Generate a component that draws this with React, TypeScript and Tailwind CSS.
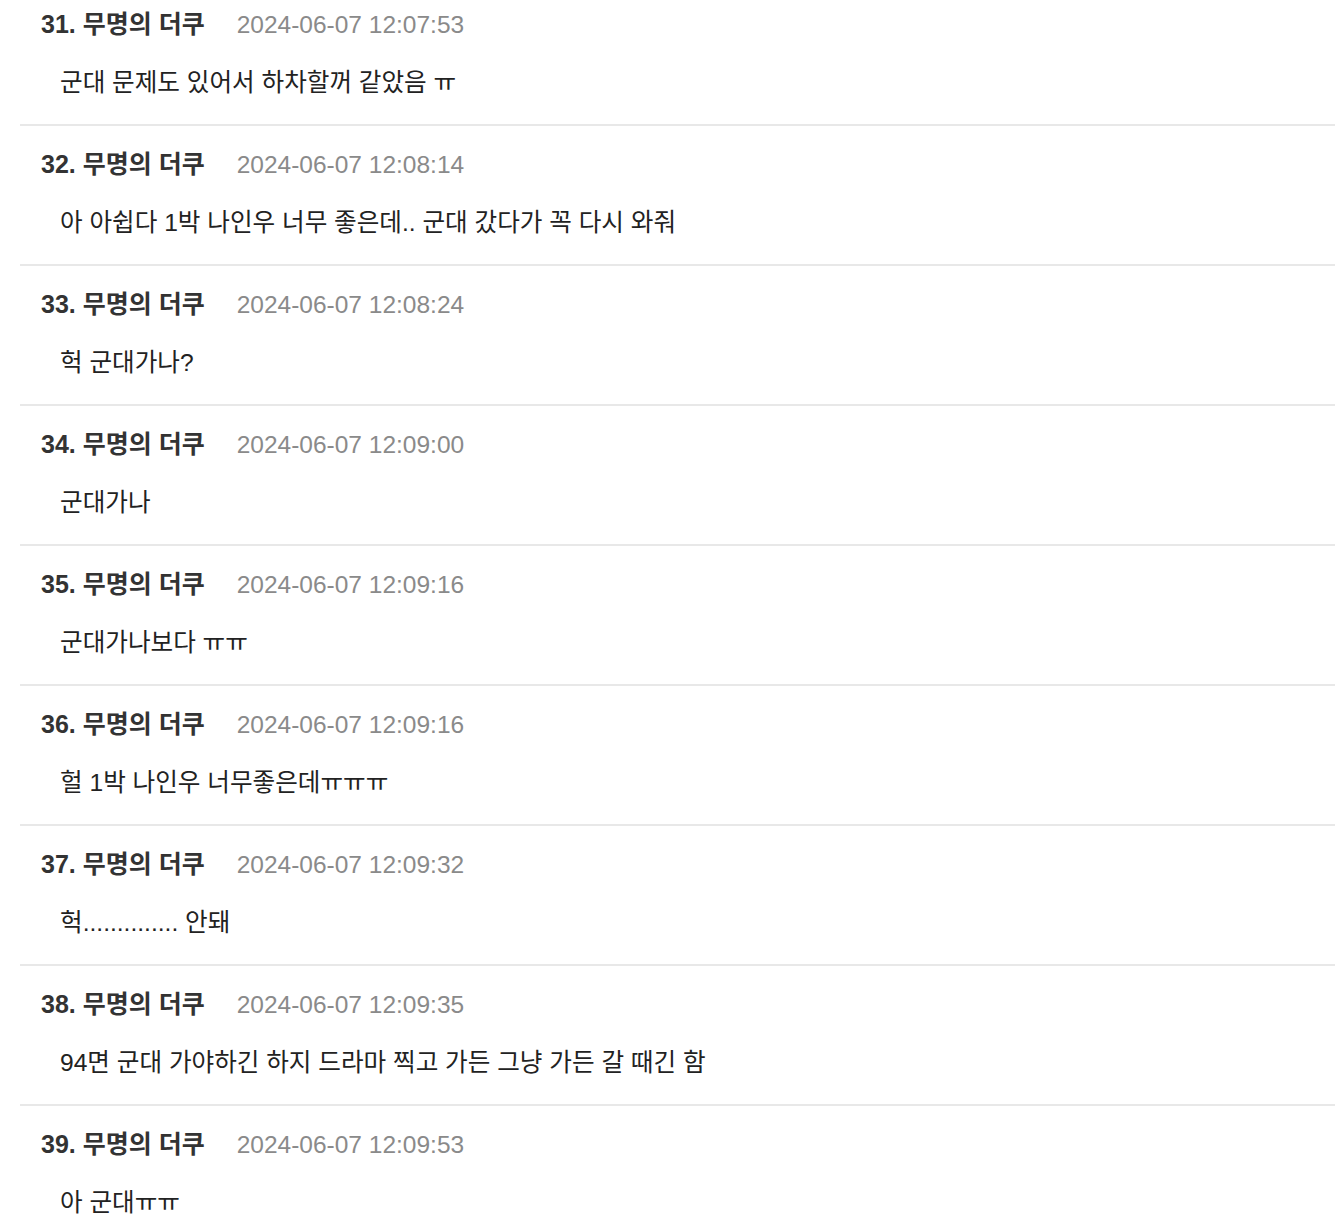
const comments = [
  {no: 31, name: '무명의 더쿠', date: '2024-06-07 12:07:53', body: '군대 문제도 있어서 하차할꺼 같았음 ㅠ'},
  {no: 32, name: '무명의 더쿠', date: '2024-06-07 12:08:14', body: '아 아쉽다 1박 나인우 너무 좋은데.. 군대 갔다가 꼭 다시 와줘'},
  {no: 33, name: '무명의 더쿠', date: '2024-06-07 12:08:24', body: '헉 군대가나?'},
  {no: 34, name: '무명의 더쿠', date: '2024-06-07 12:09:00', body: '군대가나'},
  {no: 35, name: '무명의 더쿠', date: '2024-06-07 12:09:16', body: '군대가나보다 ㅠㅠ'},
  {no: 36, name: '무명의 더쿠', date: '2024-06-07 12:09:16', body: '헐 1박 나인우 너무좋은데ㅠㅠㅠ'},
  {no: 37, name: '무명의 더쿠', date: '2024-06-07 12:09:32', body: '헉.............. 안돼'},
  {no: 38, name: '무명의 더쿠', date: '2024-06-07 12:09:35', body: '94면 군대 가야하긴 하지 드라마 찍고 가든 그냥 가든 갈 때긴 함'},
  {no: 39, name: '무명의 더쿠', date: '2024-06-07 12:09:53', body: '아 군대ㅠㅠ'},
];

export default function App() {
  return (
    <div className="w-[1335px] h-[1229px] overflow-hidden bg-white font-['Liberation_Sans','Noto_Sans_CJK_KR',sans-serif]">
      <div className="-mt-[16px]">
        {comments.map((c) => (
          <div key={c.no} className="ml-[20px] border-t-2 border-[#e8e8e8] pt-[23px] pb-[25px]">
            <div className="flex items-center h-8 pl-[21px]">
              <span className="text-[25px] font-bold text-[#333]">{c.no}. {c.name}</span>
              <span className="ml-[32px] text-[24.5px] text-[#8a8a8a]">{c.date}</span>
            </div>
            <div className="mt-[26px] h-8 flex items-center pl-[40px] text-[24.6px] text-[#222]">
              {c.body}
            </div>
          </div>
        ))}
      </div>
    </div>
  );
}
